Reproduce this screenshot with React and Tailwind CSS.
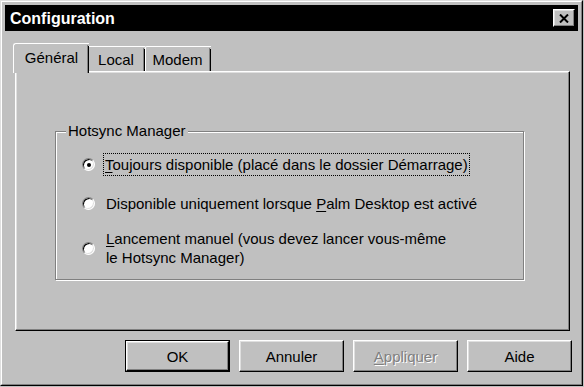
import React from "react";

const font = { fontFamily: '"Liberation Sans", Arial, sans-serif' };

function Radio({ checked }) {
  return (
    <div className="relative w-[13px] h-[13px] shrink-0 rounded-full bg-white border border-t-[#808080] border-l-[#808080] border-r-white border-b-white shadow-[inset_1px_1px_0_#000,inset_-1px_-1px_0_#dfdfdf]">
      {checked && (
        <div className="absolute left-[3.5px] top-[3.5px] w-[4px] h-[4px] rounded-full bg-black" />
      )}
    </div>
  );
}

function Button({ children, def }) {
  return (
    <div className={"w-[105px] h-[32px] " + (def ? "border border-black" : "")}>
      <div className="w-full h-full flex items-center justify-center bg-[#c0c0c0] border border-t-white border-l-white border-r-black border-b-black shadow-[inset_-1px_-1px_0_#808080,inset_1px_1px_0_#dfdfdf]">
        {children}
      </div>
    </div>
  );
}

function TabEdge() {
  return (
    <div className="w-[2px] h-full flex">
      <div className="w-[1px] bg-[#808080] mt-[1px]" />
      <div className="w-[1px] bg-black mt-[2px]" />
    </div>
  );
}

export default function App() {
  return (
    <div
      className="w-[584px] h-[387px] bg-[#c0c0c0] text-[15px] text-black leading-[17px] overflow-hidden"
      style={font}
    >
      <div className="w-[583px] h-[386px] border border-t-[#dfdfdf] border-l-[#dfdfdf] border-r-black border-b-black">
        <div className="w-full h-full border border-t-white border-l-white border-r-[#808080] border-b-[#808080] p-[3px] flex flex-col">
          {/* Title bar */}
          <div className="h-[26px] bg-black flex items-center justify-between pl-[5px] pr-[3px]">
            <span className="text-white font-bold text-[16px]">Configuration</span>
            <div className="w-[22px] h-[18px] bg-[#c0c0c0] border border-t-white border-l-white border-r-black border-b-black shadow-[inset_-1px_-1px_0_#808080,inset_1px_1px_0_#dfdfdf] flex items-center justify-center">
              <svg width="10" height="9" viewBox="0 0 10 9">
                <path d="M1 0.5 L9 8.5 M9 0.5 L1 8.5" stroke="#000" strokeWidth="2" />
              </svg>
            </div>
          </div>

          {/* Tabs */}
          <div className="mt-[12px] ml-[8px] h-[28px] flex items-end relative z-10">
            <div className="w-[76px] h-[30px] -mb-[2px] bg-[#c0c0c0] border-t border-l border-t-white border-l-white rounded-tl-[3px] flex">
              <div className="flex-1 flex items-start justify-center pt-[5px] pl-[2px]">Général</div>
              <TabEdge />
            </div>
            <div className="w-[56px] h-[25px] bg-[#c0c0c0] border-t border-t-white flex">
              <div className="flex-1 flex items-start justify-center pt-[4px]">Local</div>
              <TabEdge />
            </div>
            <div className="w-[66px] h-[25px] bg-[#c0c0c0] border-t border-l border-t-white border-l-white rounded-tl-[2px] flex">
              <div className="flex-1 flex items-start justify-center pt-[4px]">Modem</div>
              <TabEdge />
            </div>
          </div>

          {/* Panel */}
          <div className="ml-[10px] mr-[8px] h-[260px] border border-t-white border-l-white border-r-black border-b-black shadow-[inset_-1px_-1px_0_#808080,inset_1px_1px_0_#dfdfdf] pt-[59px] pl-[39px] pr-[45px]">
            <div className="relative h-[149px] border border-[#808080] shadow-[inset_1px_1px_0_#fff,1px_1px_0_#fff] pl-[26px] pt-[21px]">
              <div className="absolute left-[10px] -top-[10px] px-[2px] bg-[#c0c0c0]">
                Hotsync Manager
              </div>
              <div className="flex items-center gap-[8px]">
                <Radio checked />
                <span className="border border-dotted border-black px-[1px] py-[2px]">
                  <span className="underline underline-offset-2">T</span>oujours disponible (placé dans le dossier Démarrage)
                </span>
              </div>
              <div className="flex items-center gap-[11px] mt-[19px]">
                <Radio />
                <span>
                  Disponible uniquement lorsque <span className="underline underline-offset-2">P</span>alm Desktop est activé
                </span>
              </div>
              <div className="flex items-center gap-[11px] mt-[17px]">
                <Radio />
                <span className="leading-[19px]">
                  <span className="underline underline-offset-2">L</span>ancement manuel (vous devez lancer vous-même
                  <br />
                  le Hotsync Manager)
                </span>
              </div>
            </div>
          </div>

          {/* Buttons */}
          <div className="mt-[9px] flex justify-end gap-[9px] pr-[6px]">
            <Button def>OK</Button>
            <Button>Annuler</Button>
            <Button>
              <span className="text-[#808080] [text-shadow:1px_1px_0_#fff]">
                <span className="underline underline-offset-2">A</span>ppliquer
              </span>
            </Button>
            <Button>Aide</Button>
          </div>
        </div>
      </div>
    </div>
  );
}
